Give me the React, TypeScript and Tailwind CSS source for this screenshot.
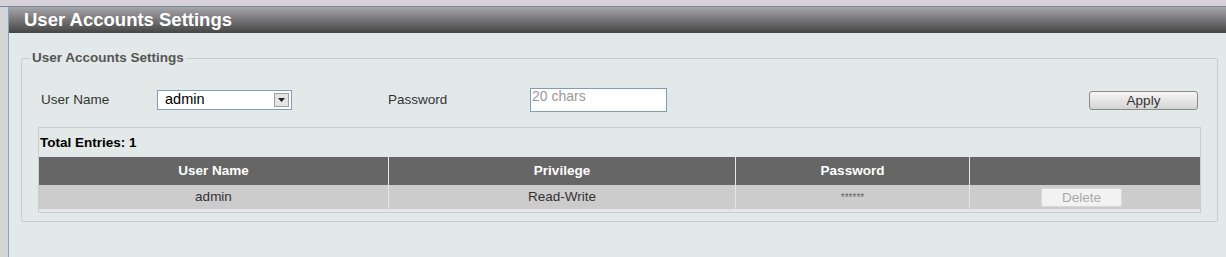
export default function App() {
  return (
    <div className="w-[1226px] h-[257px] overflow-hidden bg-[#e2e9e8] flex flex-col font-['Liberation_Sans',Arial,sans-serif]">
      <div className="h-[7px] bg-[#d6d2d8] border-b border-[#6f8fa0]" />
      <div className="flex flex-1">
        <div className="w-[8px] bg-[#d2d4d6]" />
        <div className="w-[1px] bg-[#7ea6c4]" />
        <div className="flex-1 flex flex-col">
          <div className="h-[26px] bg-linear-to-b from-[#a8a6aa] to-[#464646] flex items-center pl-[15px]">
            <span className="text-white font-bold text-[18.5px] leading-none">User Accounts Settings</span>
          </div>
          <fieldset className="ml-[12px] mt-[15px] w-[1194px] h-[174px] border border-[#c4cccc] rounded-[2px] px-[16px]">
            <legend className="px-[2px] ml-[-8px] text-[13.5px] font-bold text-[#555]">User Accounts Settings</legend>
            <div className="flex items-center h-[24px] mt-[20px] text-[13.5px] text-[#333]">
              <span className="w-[119px] pl-[3px]">User Name</span>
              <div className="w-[135px] h-[20px] bg-white border border-[#7f9db9] flex items-center justify-between pl-[7px] pr-[2px]">
                <span className="text-[14.5px] text-black">admin</span>
                <div className="w-[15px] h-[14px] bg-[#e4e4e4] border border-[#a0a0a0] flex items-center justify-center">
                  <svg width="7" height="4" viewBox="0 0 7 4"><path d="M0 0h7L3.5 4z" fill="#222" /></svg>
                </div>
              </div>
              <span className="ml-[96px] w-[142px]">Password</span>
              <div className="w-[137px] h-[24px] bg-white border border-[#7f9db9] pl-[1px] leading-[15px] text-[14px] text-[#999] -mt-[1px]">20 chars</div>
              <div className="flex-1" />
              <button className="w-[109px] h-[19px] mr-[3px] rounded-[3px] border border-[#8a8a8a] bg-linear-to-b from-[#f6f6f6] to-[#d4d4d4] text-[13.5px] text-[#333] leading-none">Apply</button>
            </div>
            <div className="mt-[15px] w-[1163px] h-[86px] border border-[#c6cece] flex flex-col">
              <div className="h-[29px] flex items-center pl-[1px] text-[13.5px] font-bold text-black">Total Entries: 1</div>
              <div className="grid grid-cols-[350px_347px_234px_1fr] h-[28px] bg-[#666] text-white font-bold text-[13.5px]">
                <div className="flex items-center justify-center border-r border-[#e6e6e6]">User Name</div>
                <div className="flex items-center justify-center border-r border-[#e6e6e6]">Privilege</div>
                <div className="flex items-center justify-center border-r border-[#e6e6e6]">Password</div>
                <div />
              </div>
              <div className="grid grid-cols-[350px_347px_234px_1fr] h-[25px] bg-[#cccccc] text-[13.5px] text-[#333] border-b border-[#e6e6e6]">
                <div className="flex items-center justify-center border-r border-[#e6e6e6]">admin</div>
                <div className="flex items-center justify-center border-r border-[#e6e6e6]">Read-Write</div>
                <div className="flex items-center justify-center border-r border-[#e6e6e6] text-[10px] text-[#666]">******</div>
                <div className="flex items-center pl-[71px]">
                  <button className="w-[81px] h-[19px] rounded-[2px] border border-[#d8d8d8] bg-[#f2f2f2] text-[13.5px] text-[#aaa] leading-none">Delete</button>
                </div>
              </div>
            </div>
          </fieldset>
        </div>
      </div>
    </div>
  )
}
